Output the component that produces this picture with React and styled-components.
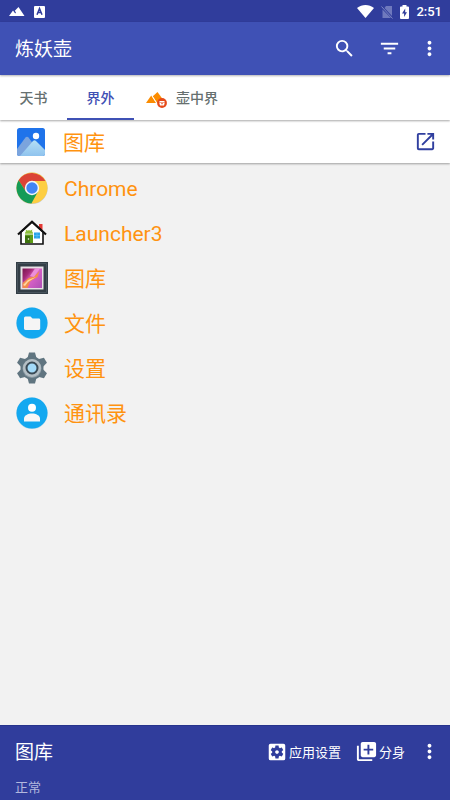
import React, { useState } from 'react';
import styled, { createGlobalStyle } from 'styled-components';
import {
  MdSearch,
  MdFilterList,
  MdMoreVert,
  MdOpenInNew,
  MdLibraryAdd,
  MdSettingsApplications,
} from 'react-icons/md';

const GlobalStyle = createGlobalStyle`
  * { box-sizing: border-box; }
  body {
    margin: 0;
    background: #f2f2f2;
    font-family: Roboto, "Noto Sans CJK SC", sans-serif;
  }
  button {
    margin: 0;
    padding: 0;
    border: 0;
    background: none;
    font: inherit;
    color: inherit;
    cursor: pointer;
  }
  svg { display: block; flex: none; }
`;

const Screen = styled.div`
  display: flex;
  flex-direction: column;
  min-height: 100vh;
`;

const StatusBar = styled.div`
  display: flex;
  align-items: center;
  justify-content: space-between;
  height: 22px;
  padding: 1px 8px 0 9px;
  background: #303d9c;
  color: #fff;
`;

const StatusGroup = styled.div`
  display: flex;
  align-items: center;
  gap: ${(p) => p.$gap}px;
`;

const Clock = styled.time`
  font-size: 13px;
  font-weight: 500;
  line-height: 16px;
`;

const AppBar = styled.header`
  display: flex;
  align-items: center;
  justify-content: space-between;
  height: 53px;
  padding: 0 4px 0 15px;
  background: #3f51b5;
  color: #fff;
  box-shadow: 0 1px 2px rgba(0, 0, 0, 0.3);
  z-index: 2;
`;

const BarTitle = styled.h1`
  margin: 0;
  padding-top: 2px;
  font-size: 19px;
  font-weight: 400;
  line-height: 24px;
`;

const Actions = styled.div`
  display: flex;
  align-items: center;
`;

const IconButton = styled.button`
  display: flex;
  align-items: center;
  justify-content: center;
  width: ${(p) => p.$width}px;
  height: 45px;
`;

const Tabs = styled.nav`
  display: flex;
  height: 45px;
  background: #fff;
  box-shadow: 0 1px 2px rgba(0, 0, 0, 0.35);
  z-index: 1;
`;

const Tab = styled.button`
  display: flex;
  align-items: center;
  justify-content: center;
  gap: 8px;
  min-width: 67px;
  && {
    padding: 0 12px;
    border-bottom: 2px solid ${(p) => (p.$active ? '#3f51b5' : 'transparent')};
    color: ${(p) => (p.$active ? '#3f51b5' : '#66706f')};
    font-size: 14px;
    font-weight: 500;
  }
`;

const SelectedApp = styled.section`
  display: flex;
  align-items: center;
  justify-content: space-between;
  height: 43px;
  padding: 0 2px 0 17px;
  background: #fff;
  color: #303f9f;
  box-shadow: 0 1px 2px rgba(0, 0, 0, 0.35);
`;

const AppLabel = styled.div`
  display: flex;
  align-items: center;
  gap: 18px;
`;

const AppName = styled.span`
  padding-top: 2px;
  color: #ff9310;
  font-size: 21px;
  line-height: 28px;
`;

const AppList = styled.ul`
  flex: 1;
  margin: 0;
  padding: 2px 0;
  list-style: none;
`;

const AppRow = styled.button`
  display: flex;
  align-items: center;
  gap: 16px;
  width: 100%;
  height: 45px;
  && { padding: 0 16px; }
`;

const BottomBar = styled.footer`
  height: 75px;
  padding: 3px 4px 0 15px;
  border-top: 1px solid #26348c;
  background: #303d9c;
  color: #fff;
`;

const BottomRow = styled.div`
  display: flex;
  align-items: center;
  justify-content: space-between;
`;

const TextAction = styled.button`
  display: flex;
  align-items: center;
  height: 45px;
  gap: 1px;
  && {
    padding: 0 7px;
    font-size: 13px;
  }
`;

const Status = styled.p`
  margin: 4px 0 0;
  color: #b3b8de;
  font-size: 13px;
  line-height: 20px;
`;

const PeaksIcon = () => (
  <svg width="16" height="9" viewBox="0 0 16 9" aria-hidden="true">
    <path d="M0 9 4 3.600 6.200 6.400 7 5.400 5.800 3.800 9.500 0 15.500 9Z" fill="#fff" />
  </svg>
);

const LetterIcon = () => (
  <svg width="11" height="12" viewBox="0 0 11 12" aria-hidden="true">
    <rect width="11" height="12" rx="1" fill="#fff" />
    <path d="M3 8.7 5.5 2.6 8 8.7M4 6.6h3" fill="none" stroke="#303d9c" strokeWidth="1.5" />
  </svg>
);

const WifiIcon = () => (
  <svg width="17" height="13" viewBox="0 0 17 13" aria-hidden="true">
    <path d="M8.5 13 0 3C5-1 12-1 17 3Z" fill="#fff" />
  </svg>
);

const NoSimIcon = () => (
  <svg width="12" height="14" viewBox="0 0 12 14" aria-hidden="true">
    <path d="M5 1h6v10L3.5 3ZM1.5 4.5 10 13H1.5Z" fill="#6f79bd" />
    <path d="m.5 1.5 11 12" stroke="#7d86c4" />
  </svg>
);

const BatteryIcon = () => (
  <svg width="9" height="14" viewBox="0 0 9 14" aria-hidden="true">
    <path d="M2.5 0h4v1.5H8q1 0 1 1V13q0 1-1 1H1q-1 0-1-1V2.5q0-1 1-1h1.5Z" fill="#fff" />
    <path d="M5.2 3.6 2 8.5h2.1v3.6L7 7.2H5.2Z" fill="#303d9c" />
  </svg>
);

const PotIcon = () => (
  <svg width="22" height="22" viewBox="0 0 22 22" aria-hidden="true">
    <path d="M0 17 5.200 9.500 10 17Z" fill="#fb8c00" />
    <path d="M11 17 6.800 10.300 11.500 6 19.500 17Z" fill="#fb8c00" />
    <path d="m6 9.800 4.800 7.200" stroke="#fff" strokeWidth=".7" />
    <circle cx="16" cy="17" r="4.900" fill="#e64a19" />
    <path d="M13.500 15h5v1h-5zM13.200 16.500h5.600l-.8 3h-4Z" fill="#fff" />
    <path d="M15 17.700h2" stroke="#e64a19" strokeWidth=".8" />
  </svg>
);

const PhotoIcon = () => (
  <svg width="28" height="28" viewBox="0 0 28 28" aria-hidden="true">
    <defs>
      <clipPath id="photoFrame"><rect width="28" height="28" rx="2.5" /></clipPath>
      <linearGradient id="frontPeak" x1="0" y1="0" x2="0" y2="1">
        <stop offset="0" stopColor="#b4dff5" />
        <stop offset="1" stopColor="#8fc3ee" />
      </linearGradient>
    </defs>
    <g clipPath="url(#photoFrame)">
      <rect width="28" height="28" fill="#1f73ea" />
      <path d="M0 21 8.5 9.5q1.5-1.5 3 0L25 28H0Z" fill="#7ba4dd" />
      <path d="M3 28 16 13q1.5-1.3 3 0l9 9v6Z" fill="url(#frontPeak)" />
      <circle cx="19" cy="8" r="3.2" fill="#fff" />
    </g>
  </svg>
);

const ChromeIcon = () => (
  <svg width="32" height="32" viewBox="0 0 32 32" aria-hidden="true">
    <circle cx="16" cy="16.3" r="15.7" fill="#c9cac9" />
    <circle cx="16" cy="16" r="15.5" fill="#fdce42" />
    <path d="M16 16 9.9 19.5 2.6 8.2A15.5 15.5 0 0 1 29.4 9H16Z" fill="#db4437" />
    <path d="M2.6 8.2A15.5 15.5 0 0 0 15.4 31.5L22 19.6 16 16l-6.1 3.5Z" fill="#159b57" />
    <circle cx="16" cy="16" r="7.2" fill="#f5f7f8" />
    <circle cx="16" cy="16" r="5.7" fill="#4285f4" />
  </svg>
);

const HouseIcon = () => (
  <svg width="32" height="32" viewBox="0 0 32 32" aria-hidden="true">
    <path d="M23 7h3.500v7H23z" fill="#e53935" />
    <path d="M5 15 16 5l11 10v12H5Z" fill="#fff" stroke="#111" strokeWidth="1.6" />
    <path d="M2 17.5 16 4.8l14 12.7" fill="none" stroke="#111" strokeWidth="2.2" />
    <path d="M9 17.5h8V26H9z" fill="#5e9c16" />
    <path d="M9 16.8a4 3.5 0 0 1 8 0Z" fill="#8bbd36" />
    <path d="m10 12.8 1 1.8m5-1.8-1 1.8" stroke="#8bbd36" />
    <path d="M9 19h5v7H9z" fill="#3d730d" />
    <circle cx="12.5" cy="22" r=".8" fill="#fff" />
    <path d="M18 15.5h6v6h-6z" fill="#29a3e8" />
    <path d="M21 15.5v6m-3-3h6" stroke="#6bc5f5" strokeWidth=".6" />
  </svg>
);

const FrameIcon = () => (
  <svg width="32" height="32" viewBox="0 0 32 32" aria-hidden="true">
    <defs>
      <linearGradient id="flower" x1="0" y1="0" x2="1" y2=".8">
        <stop offset="0" stopColor="#7a1450" />
        <stop offset=".3" stopColor="#a42a76" />
        <stop offset=".5" stopColor="#dc63c8" />
        <stop offset="1" stopColor="#b552b8" />
      </linearGradient>
    </defs>
    <path d="M0 0h32v32H0z" fill="#333e46" />
    <path d="M1.5 1.5h29v29h-29z" fill="none" stroke="#48545d" />
    <path d="M4.5 4.5h23v23h-23z" fill="#e7e1e4" />
    <path d="M6.5 6.5h19.5V26H6.5z" fill="url(#flower)" />
    <path d="M6.5 26v-5l6-5 6-2 5-5-2 6-7 4-3 7Z" fill="#f38b4c" />
    <path d="m7 23 5-5 8-3-8 5-3 4Z" fill="#ffd7a0" />
    <path d="m14 14 5-7.500h5L18 15Z" fill="#ec8fda" />
  </svg>
);

const FolderIcon = () => (
  <svg width="32" height="32" viewBox="0 0 32 32" aria-hidden="true">
    <circle cx="16" cy="16.3" r="15.7" fill="#b8d8e8" />
    <circle cx="16" cy="16" r="15.5" fill="#13a8f0" />
    <path d="M9.5 9.5h5l2 2h6.3q1.4 0 1.4 1.4v8.7q0 1.4-1.4 1.4H9.5Q8 23 8 21.600V11q0-1.500 1.500-1.500Z" fill="#f5f5f5" />
  </svg>
);

const GearIcon = () => (
  <svg width="32" height="32" viewBox="0 0 32 32" aria-hidden="true">
    <g fill="#607580">
      {[0, 60, 120].map((angle) => (
        <path
          key={angle}
          d="M13 .5h6l1.600 6v19l-1.600 6h-6l-1.600-6v-19Z"
          transform={`rotate(${angle} 16 16)`}
        />
      ))}
      <circle cx="16" cy="16" r="11.500" />
    </g>
    <circle cx="16" cy="16.500" r="9.500" fill="#8b9aa3" />
    <circle cx="16" cy="16" r="9" fill="#b4bfc5" />
    <circle cx="16" cy="16" r="5.500" fill="#a3daf8" stroke="#3a4a55" strokeWidth="2" />
  </svg>
);

const ContactIcon = () => (
  <svg width="32" height="32" viewBox="0 0 32 32" aria-hidden="true">
    <circle cx="16" cy="16.300" r="15.700" fill="#b8d8e8" />
    <circle cx="16" cy="16" r="15.500" fill="#13a8f0" />
    <circle cx="16" cy="10.800" r="4" fill="#fff" />
    <path d="M8 24.500v-3c0-3 4-5 8-5s8 2 8 5v3Z" fill="#f7f7f7" />
  </svg>
);

const apps = [
  { id: 'chrome', name: 'Chrome', Icon: ChromeIcon },
  { id: 'launcher', name: 'Launcher3', Icon: HouseIcon },
  { id: 'gallery', name: '图库', Icon: FrameIcon },
  { id: 'files', name: '文件', Icon: FolderIcon },
  { id: 'settings', name: '设置', Icon: GearIcon },
  { id: 'contacts', name: '通讯录', Icon: ContactIcon },
];

const tabs = [
  { name: '天书' },
  { name: '界外' },
  { name: '壶中界', Icon: PotIcon },
];

export default function App() {
  const [active, setActive] = useState(1);
  return (
    <>
      <GlobalStyle />
      <Screen>
        <StatusBar>
          <StatusGroup $gap={9}>
            <PeaksIcon />
            <LetterIcon />
          </StatusGroup>
          <StatusGroup $gap={7}>
            <WifiIcon />
            <NoSimIcon />
            <BatteryIcon />
            <Clock>2:51</Clock>
          </StatusGroup>
        </StatusBar>
        <AppBar>
          <BarTitle>炼妖壶</BarTitle>
          <Actions>
            <IconButton $width={45} aria-label="搜索"><MdSearch size={23} /></IconButton>
            <IconButton $width={45} aria-label="筛选"><MdFilterList size={23} /></IconButton>
            <IconButton $width={34} aria-label="更多"><MdMoreVert size={23} /></IconButton>
          </Actions>
        </AppBar>
        <Tabs>
          {tabs.map(({ name, Icon }, i) => (
            <Tab key={name} $active={i === active} onClick={() => setActive(i)}>
              {Icon && <Icon />}
              {name}
            </Tab>
          ))}
        </Tabs>
        <SelectedApp>
          <AppLabel>
            <PhotoIcon />
            <AppName>图库</AppName>
          </AppLabel>
          <IconButton $width={45} aria-label="打开"><MdOpenInNew size={23} /></IconButton>
        </SelectedApp>
        <AppList>
          {apps.map(({ id, name, Icon }) => (
            <li key={id}>
              <AppRow>
                <Icon />
                <AppName>{name}</AppName>
              </AppRow>
            </li>
          ))}
        </AppList>
        <BottomBar>
          <BottomRow>
            <BarTitle as="h2">图库</BarTitle>
            <Actions>
              <TextAction><MdSettingsApplications size={22} />应用设置</TextAction>
              <TextAction><MdLibraryAdd size={23} />分身</TextAction>
              <IconButton $width={34} aria-label="更多操作"><MdMoreVert size={23} /></IconButton>
            </Actions>
          </BottomRow>
          <Status>正常</Status>
        </BottomBar>
      </Screen>
    </>
  );
}
